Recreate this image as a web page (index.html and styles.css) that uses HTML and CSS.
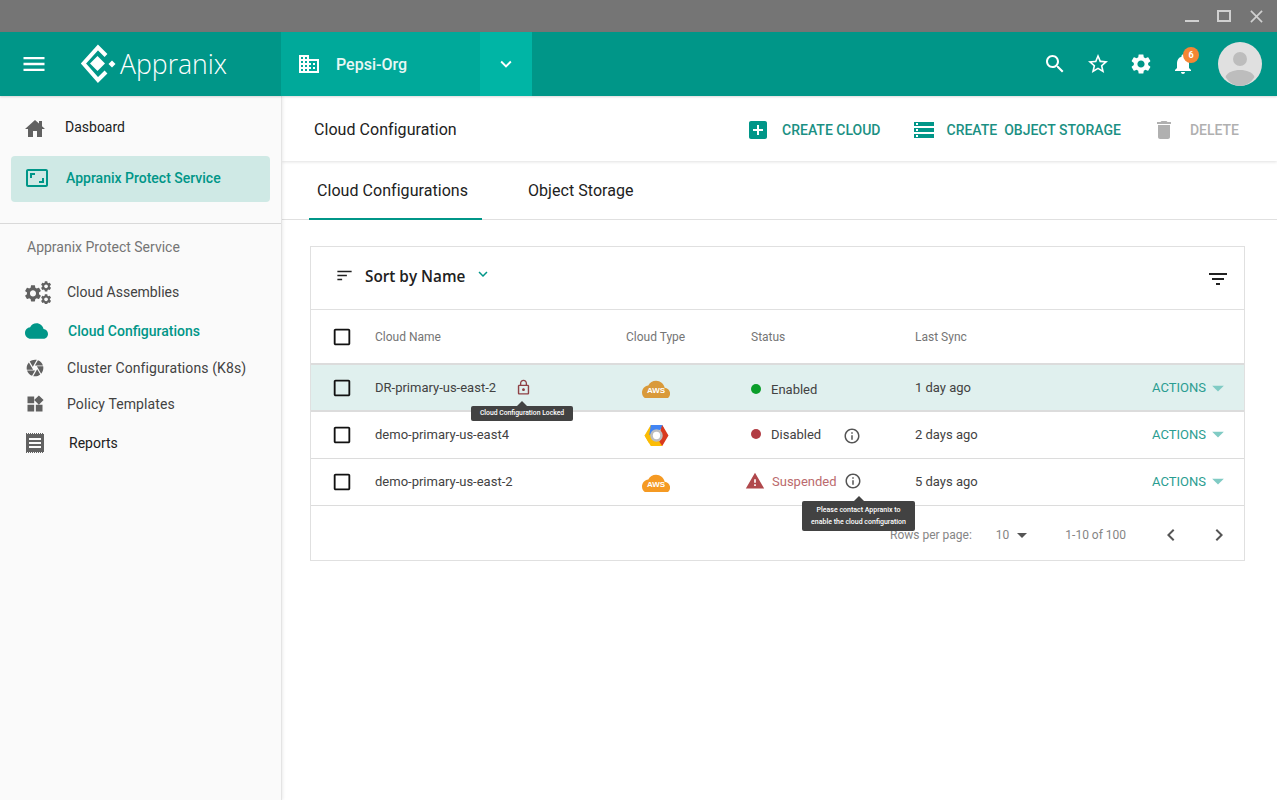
FILE: index.html
```html
<!DOCTYPE html>
<html lang="en">
<head>
    <meta charset="UTF-8">
    <title>Appranix</title>
    <link rel="stylesheet" href="styles.css">
</head>
<body>
    <svg class="defs" width="0" height="0">
        <defs>
            <path id="gear" d="M19.14 12.94c.04-.3.06-.61.06-.94 0-.32-.02-.64-.07-.94l2.03-1.58c.18-.14.23-.41.12-.61l-1.92-3.32c-.12-.22-.37-.29-.59-.22l-2.39.96c-.5-.38-1.03-.7-1.62-.94l-.36-2.54c-.04-.24-.24-.41-.48-.41h-3.84c-.24 0-.43.17-.47.41l-.36 2.54c-.59.24-1.13.57-1.62.94l-2.39-.96c-.22-.08-.47 0-.59.22L2.74 8.87c-.12.21-.08.47.12.61l2.03 1.58c-.05.3-.09.63-.09.94s.02.64.07.94l-2.03 1.58c-.18.14-.23.41-.12.61l1.92 3.32c.12.22.37.29.59.22l2.39-.96c.5.38 1.03.7 1.62.94l.36 2.54c.05.24.24.41.48.41h3.84c.24 0 .44-.17.47-.41l.36-2.54c.59-.24 1.13-.56 1.62-.94l2.39.96c.22.08.47 0 .59-.22l1.92-3.32c.12-.22.07-.47-.12-.61l-2.01-1.58zM12 15.6c-1.98 0-3.6-1.62-3.6-3.6s1.62-3.6 3.6-3.6 3.6 1.62 3.6 3.6-1.62 3.6-3.6 3.6z"/>
            <path id="box" d="M19 5v14H5V5h14m0-2H5c-1.1 0-2 .9-2 2v14c0 1.1.9 2 2 2h14c1.1 0 2-.9 2-2V5c0-1.1-.9-2-2-2z"/>
            <path id="drop" d="M7 10l5 5 5-5z"/>
            <path id="info" d="M11 7h2v2h-2zm0 4h2v6h-2zm1-9C6.48 2 2 6.48 2 12s4.48 10 10 10 10-4.48 10-10S17.52 2 12 2zm0 18c-4.41 0-8-3.59-8-8s3.59-8 8-8 8 3.59 8 8-3.59 8-8 8z"/>
            <path id="cloudshape" d="M19.35 10.04C18.67 6.59 15.64 4 12 4 9.11 4 6.6 5.64 5.35 8.04 2.34 8.36 0 10.91 0 14c0 3.31 2.69 6 6 6h13c2.76 0 5-2.24 5-5 0-2.64-2.05-4.78-4.65-4.96z"/>
        </defs>
    </svg>

    <!-- window title bar -->
    <div class="titlebar">
        <span class="win-min"></span>
        <span class="win-max"></span>
        <svg class="win-close" viewBox="0 0 14 14"><path d="M1 1l12 12M13 1L1 13"/></svg>
    </div>

    <!-- top header -->
    <header class="header">
        <div class="brand">
            <svg class="menu-icon" viewBox="0 0 24 24"><path d="M3 18h18v-2H3v2zm0-5h18v-2H3v2zm0-7v2h18V6H3z"/></svg>
            <svg class="logo" viewBox="0 0 36 40">
                <path class="logo-line" d="M26 11.500L18 3.500 3.500 19.500 18 36 26 28"/>
                <path d="M17.500 12L25 19.500 17.500 27 10 19.500z"/>
                <path d="M32 16.500L35.500 20 32 23.500 28.500 20z"/>
            </svg>
            <span class="logo-text">Appranix</span>
        </div>
        <div class="org">
            <svg class="org-icon" viewBox="0 0 24 24"><path d="M12 7V3H2v18h20V7H12zM6 19H4v-2h2v2zm0-4H4v-2h2v2zm0-4H4V9h2v2zm0-4H4V5h2v2zm4 12H8v-2h2v2zm0-4H8v-2h2v2zm0-4H8V9h2v2zm0-4H8V5h2v2zm10 12h-8v-2h2v-2h-2v-2h2v-2h-2V9h8v10zm-2-8h-2v2h2v-2zm0 4h-2v2h2v-2z"/></svg>
            <span class="org-name">Pepsi-Org</span>
        </div>
        <div class="org-toggle">
            <svg viewBox="0 0 24 24"><path d="M16.59 8.59L12 13.17 7.41 8.59 6 10l6 6 6-6z"/></svg>
        </div>
        <div class="header-actions">
            <svg class="head-icon" viewBox="0 0 24 24"><path d="M15.500 14h-.79l-.28-.27C15.410 12.590 16 11.110 16 9.500 16 5.910 13.090 3 9.500 3S3 5.910 3 9.500 5.910 16 9.500 16c1.610 0 3.090-.59 4.230-1.570l.27.28v.79l5 4.990L20.490 19l-4.990-5zm-6 0C7.010 14 5 11.990 5 9.500S7.010 5 9.500 5 14 7.010 14 9.500 11.990 14 9.500 14z"/></svg>
            <svg class="head-icon" viewBox="0 0 24 24"><path d="M22 9.240l-7.190-.62L12 2 9.190 8.630 2 9.240l5.460 4.730L5.820 21 12 17.270 18.180 21l-1.630-7.030L22 9.240zM12 15.400l-3.760 2.270 1-4.280-3.320-2.880 4.380-.38L12 6.100l1.710 4.040 4.380.38-3.320 2.880 1 4.280L12 15.400z"/></svg>
            <svg class="head-icon head-gear" viewBox="0 0 24 24"><use href="#gear"/></svg>
            <div class="bell">
                <svg class="head-icon" viewBox="0 0 24 24"><path d="M12 22c1.100 0 2-.9 2-2h-4c0 1.100.89 2 2 2zm6-6v-5c0-3.070-1.640-5.640-4.500-6.320V4c0-.83-.67-1.500-1.500-1.500s-1.500.67-1.500 1.500v.68C7.630 5.360 6 7.920 6 11v5l-2 2v1h16v-1l-2-2z"/></svg>
                <span class="badge">6</span>
            </div>
            <svg class="avatar" viewBox="0 0 44 44">
                <circle cx="22" cy="22" r="22" fill="#e0e0e0"/>
                <circle cx="22" cy="17" r="7" fill="#bdbdbd"/>
                <path d="M7.500 35c2-5 8-7 14.500-7s12.500 2 14.500 7C33 41 27 44 22 44S11 41 7.500 35z" fill="#bdbdbd"/>
            </svg>
        </div>
    </header>

    <div class="layout">
        <!-- left side navigation -->
        <aside class="sidebar">
            <div class="nav-top">
                <a class="nav-home">
                    <svg viewBox="0 0 24 24"><path d="M19 9.300V4h-3v2.600L12 3 2 12h3v8h5v-6h4v6h5v-8h3l-3-2.700z"/></svg>
                    <span>Dasboard</span>
                </a>
                <a class="nav-service">
                    <svg viewBox="0 0 24 24"><path d="M19 12h-2v3h-3v2h5v-5zM7 9h3V7H5v5h2V9zm14-6H3c-1.100 0-2 .9-2 2v14c0 1.100.9 2 2 2h18c1.100 0 2-.9 2-2V5c0-1.100-.9-2-2-2zm0 16.010H3V4.990h18v14.020z"/></svg>
                    <span>Appranix Protect Service</span>
                </a>
            </div>
            <div class="nav-section">
                <div class="nav-title">Appranix Protect Service</div>
                <a class="nav-item nav-assemblies">
                    <svg class="ic-gears" viewBox="0 0 26 23">
                        <use href="#gear" transform="translate(-2.100 2.300) scale(.84)"/>
                        <use href="#gear" transform="translate(14.700 -1) scale(.53)"/>
                        <use href="#gear" transform="translate(14.700 12) scale(.53)"/>
                    </svg>
                    <span>Cloud Assemblies</span>
                </a>
                <a class="nav-item nav-active">
                    <svg class="ic-cloud" viewBox="0 0 24 16"><use href="#cloudshape" transform="translate(0 -4)"/></svg>
                    <span>Cloud Configurations</span>
                </a>
                <a class="nav-item nav-cluster">
                    <svg viewBox="0 0 24 24"><path d="M9.400 10.500l4.770-8.260C13.470 2.090 12.750 2 12 2c-2.400 0-4.600.85-6.320 2.250l3.660 6.350.06-.1zM21.540 9c-.92-2.920-3.150-5.260-6-6.340L11.880 9h9.660zm.26 1h-7.490l.29.5 4.760 8.250C21 16.970 22 14.610 22 12c0-.69-.07-1.350-.2-2zM8.540 12l-3.900-6.750C3.010 7.030 2 9.390 2 12c0 .69.07 1.350.2 2h7.490l-1.150-2zm-6.080 3c.92 2.920 3.150 5.260 6 6.340L12.120 15H2.460zm11.270 0l-3.900 6.760c.7.15 1.420.24 2.170.24 2.400 0 4.600-.85 6.320-2.250l-3.660-6.350-.93 1.600z"/></svg>
                    <span>Cluster Configurations (K8s)</span>
                </a>
                <a class="nav-item nav-policy">
                    <svg viewBox="0 0 24 24"><path d="M13 13v8h8v-8h-8zM3 21h8v-8H3v8zM3 3v8h8V3H3zm13.660-1.310L11 7.340 16.660 13l5.660-5.660-5.660-5.650z"/></svg>
                    <span>Policy Templates</span>
                </a>
                <a class="nav-item nav-reports">
                    <svg viewBox="0 0 18 20">
                        <path fill-rule="evenodd" d="M0 1h18v18H0zM3 5v2h12V5zm0 4v2h12V9zm0 4v2h12v-2z"/>
                        <path class="serrated" d="M0 .5h18M0 19.500h18"/>
                    </svg>
                    <span>Reports</span>
                </a>
            </div>
        </aside>

        <main class="content">
            <div class="toolbar">
                <div class="page-title">Cloud Configuration</div>
                <a class="tool-btn btn-cloud">
                    <svg viewBox="0 0 24 24"><path d="M19 3H5c-1.110 0-2 .9-2 2v14c0 1.100.89 2 2 2h14c1.100 0 2-.9 2-2V5c0-1.100-.9-2-2-2zm-2 10h-4v4h-2v-4H7v-2h4V7h2v4h4v2z"/></svg>
                    <span>CREATE CLOUD</span>
                </a>
                <a class="tool-btn btn-storage">
                    <svg viewBox="0 0 24 24"><path d="M2 20h20v-4H2v4zm2-3h2v2H4v-2zM2 4v4h20V4H2zm4 3H4V5h2v2zm-4 7h20v-4H2v4zm2-3h2v2H4v-2z"/></svg>
                    <span>CREATE&nbsp; OBJECT STORAGE</span>
                </a>
                <a class="tool-btn btn-delete">
                    <svg viewBox="0 0 24 24"><path d="M6 19c0 1.100.9 2 2 2h8c1.100 0 2-.9 2-2V7H6v12zM19 4h-3.500l-1-1h-5l-1 1H5v2h14V4z"/></svg>
                    <span>DELETE</span>
                </a>
            </div>

            <div class="tabs">
                <div class="tab tab-active">Cloud Configurations</div>
                <div class="tab">Object Storage</div>
            </div>

            <section class="card">
                <div class="card-head">
                    <svg class="sort-icon" viewBox="0 0 24 24"><path d="M3 18h6v-2H3v2zM3 6v2h18V6H3zm0 7h12v-2H3v2z"/></svg>
                    <span class="sort-label">Sort by Name</span>
                    <svg class="sort-caret" viewBox="0 0 24 24"><path d="M16.590 8.590L12 13.170 7.410 8.590 6 10l6 6 6-6z"/></svg>
                    <svg class="filter-icon" viewBox="0 0 24 24"><path d="M10 18h4v-2h-4v2zM3 6v2h18V6H3zm3 7h12v-2H6v2z"/></svg>
                </div>

                <div class="row row-head">
                    <svg class="check" viewBox="0 0 24 24"><use href="#box"/></svg>
                    <div>Cloud Name</div>
                    <div>Cloud Type</div>
                    <div>Status</div>
                    <div>Last Sync</div>
                </div>

                <div class="row row-selected">
                    <svg class="check" viewBox="0 0 24 24"><use href="#box"/></svg>
                    <div class="name-cell">
                        <span>DR-primary-us-east-2</span>
                        <span class="lock-wrap">
                            <svg class="lock" viewBox="0 0 24 24"><path d="M12 17c1.100 0 2-.9 2-2s-.9-2-2-2-2 .9-2 2 .9 2 2 2zm6-9h-1V6c0-2.760-2.240-5-5-5S7 3.240 7 6v2H6c-1.100 0-2 .9-2 2v10c0 1.100.9 2 2 2h12c1.100 0 2-.9 2-2V10c0-1.100-.9-2-2-2zM8.900 6c0-1.710 1.390-3.100 3.100-3.100s3.100 1.390 3.100 3.100v2H8.900V6zM18 20H6V10h12v10z"/></svg>
                            <span class="tooltip tip-lock">Cloud Configuration Locked</span>
                        </span>
                    </div>
                    <div class="type-cell">
                        <svg class="aws aws-dim" viewBox="0 0 28 20"><use href="#cloudshape" transform="translate(0 -2) scale(1.170)"/><text x="14" y="15" text-anchor="middle">AWS</text></svg>
                    </div>
                    <div class="status-cell status-low">
                        <span class="dot dot-green"></span>
                        <span>Enabled</span>
                    </div>
                    <div class="sync-cell">1 day ago</div>
                    <a class="actions">ACTIONS <svg viewBox="0 0 24 24"><use href="#drop"/></svg></a>
                </div>

                <div class="row">
                    <svg class="check" viewBox="0 0 24 24"><use href="#box"/></svg>
                    <div class="name-cell"><span>demo-primary-us-east4</span></div>
                    <div class="type-cell">
                        <svg class="gcp" viewBox="0 0 24 22">
                            <path d="M6.500 1L.5 11l4 7 5-7 3-5 5-5z" fill="#fbbc05"/>
                            <path d="M6.500 1h11l1.500 3-7 3-5 2-2 2z" fill="#4285f4"/>
                            <path d="M17.500 1l6 10-6 10-5-1 5-8-2-5z" fill="#d93a1e"/>
                            <path d="M.5 11l6 10h11l-4-6-5-2-4-3z" fill="#fbbc05"/>
                            <circle cx="12" cy="11" r="6" fill="#bdbdbd"/>
                            <circle cx="12" cy="11" r="3.500" fill="#fff"/>
                        </svg>
                    </div>
                    <div class="status-cell">
                        <span class="dot dot-red"></span>
                        <span class="status-text">Disabled</span>
                        <svg class="info info-low" viewBox="0 0 24 24"><use href="#info"/></svg>
                    </div>
                    <div class="sync-cell">2 days ago</div>
                    <a class="actions">ACTIONS <svg viewBox="0 0 24 24"><use href="#drop"/></svg></a>
                </div>

                <div class="row">
                    <svg class="check" viewBox="0 0 24 24"><use href="#box"/></svg>
                    <div class="name-cell"><span>demo-primary-us-east-2</span></div>
                    <div class="type-cell">
                        <svg class="aws" viewBox="0 0 28 20"><use href="#cloudshape" transform="translate(0 -2) scale(1.170)"/><text x="14" y="15" text-anchor="middle">AWS</text></svg>
                    </div>
                    <div class="status-cell suspended">
                        <svg class="warn" viewBox="0 0 24 24"><path d="M1 21h22L12 2 1 21zm12-3h-2v-2h2v2zm0-4h-2v-4h2v4z"/></svg>
                        <span class="status-text">Suspended</span>
                        <span class="info-wrap">
                            <svg class="info" viewBox="0 0 24 24"><use href="#info"/></svg>
                            <span class="tooltip tip-contact">Please contact Appranix to<br>enable the cloud configuration</span>
                        </span>
                    </div>
                    <div class="sync-cell">5 days ago</div>
                    <a class="actions">ACTIONS <svg viewBox="0 0 24 24"><use href="#drop"/></svg></a>
                </div>

                <div class="pager">
                    <span class="pager-label">Rows per page:</span>
                    <span class="pager-size">10</span>
                    <svg class="pager-drop" viewBox="0 0 24 24"><use href="#drop"/></svg>
                    <span class="pager-range">1-10 of 100</span>
                    <svg class="pager-arrow" viewBox="0 0 24 24"><path d="M15.410 7.410L14 6l-6 6 6 6 1.410-1.410L10.830 12z"/></svg>
                    <svg class="pager-arrow" viewBox="0 0 24 24"><path d="M10 6L8.590 7.410 13.170 12l-4.580 4.590L10 18l6-6z"/></svg>
                </div>
            </section>
        </main>
    </div>
</body>
</html>
```

FILE: styles.css
```css
* {
    box-sizing: border-box;
}
html, body {
    margin: 0;
    padding: 0;
    height: 800px;
    overflow: hidden;
}
body {
    font-family: Roboto, "Liberation Sans", sans-serif;
    background-color: #fff;
    color: #212121;
}
svg {
    display: block;
    flex: none;
    fill: currentColor;
}
.defs {
    position: absolute;
}

/* title bar */
.titlebar {
    height: 32px;
    background-color: #757575;
    display: flex;
    align-items: center;
    justify-content: flex-end;
    color: #d0d0d0;
    padding-right: 14px;
}
.win-min {
    width: 14px;
    height: 2px;
    background-color: #d0d0d0;
    margin-top: 10px;
    margin-right: 18px;
}
.win-max {
    width: 14px;
    height: 12px;
    border: 2px solid #d0d0d0;
    margin-right: 19px;
}
.win-close {
    width: 13px;
    height: 13px;
    fill: none;
    stroke: #d0d0d0;
    stroke-width: 1.8;
}

/* header */
.header {
    height: 64px;
    background-color: #009688;
    display: flex;
    color: #fff;
    position: relative;
    z-index: 3;
    box-shadow: 0 1px 2px rgba(0, 0, 0, 0.15);
}
.brand {
    width: 281px;
    display: flex;
    align-items: center;
    padding-left: 20px;
}
.menu-icon {
    width: 28px;
    height: 28px;
}
.logo {
    width: 36px;
    height: 40px;
    margin-left: 32px;
}
.logo-line {
    fill: none;
    stroke: #fff;
    stroke-width: 4;
}
.logo-text {
    font-family: "Open Sans", sans-serif;
    font-weight: 300;
    font-size: 26.6px;
    margin-left: 4px;
}
.org {
    width: 199px;
    background-color: #00a99a;
    display: flex;
    align-items: center;
    padding-left: 16px;
}
.org-icon {
    width: 24px;
    height: 24px;
}
.org-name {
    font-size: 16px;
    font-weight: 500;
    margin-left: 15px;
    color: #e8f7f5;
}
.org-toggle {
    width: 52px;
    background-color: #00b5a5;
    display: flex;
    align-items: center;
    justify-content: center;
}
.org-toggle svg {
    width: 22px;
    height: 22px;
    margin-right: 1px;
}
.header-actions {
    margin-left: auto;
    display: flex;
    align-items: center;
    padding-right: 15px;
}
.head-icon {
    width: 24px;
    height: 24px;
    margin-right: 19px;
}
.head-gear {
    margin-right: 18px;
}
.bell {
    position: relative;
}
.bell .head-icon {
    margin-right: 23px;
}
.badge {
    position: absolute;
    top: -5px;
    left: 12px;
    width: 16px;
    height: 16px;
    border-radius: 50%;
    background-color: #f58634;
    color: #fff;
    font-size: 9px;
    font-weight: 700;
    line-height: 16px;
    text-align: center;
}
.avatar {
    width: 44px;
    height: 44px;
}

/* page layout */
.layout {
    display: flex;
    height: 704px;
}
.sidebar {
    width: 282px;
    flex: none;
    background-color: #fafafa;
    border-right: 1px solid #e4e4e4;
    box-shadow: 1px 0 3px rgba(0, 0, 0, 0.08);
    position: relative;
    z-index: 2;
}
.sidebar a {
    display: flex;
    align-items: center;
}
.nav-top {
    height: 128px;
    padding: 19px 11px 0;
    border-bottom: 1px solid #d9d9d9;
}
.nav-home {
    height: 24px;
    padding-left: 12px;
    font-size: 14px;
    color: #212121;
    margin-bottom: 17px;
}
.nav-home svg {
    width: 24px;
    height: 24px;
    color: #616161;
    margin-top: 3px;
}
.nav-home span {
    margin-left: 18px;
}
.nav-service {
    height: 46px;
    background-color: #cfe9e5;
    border-radius: 4px;
    padding-left: 14px;
    padding-bottom: 2px;
    color: #009688;
    font-size: 14px;
    font-weight: 500;
}
.nav-service svg {
    width: 24px;
    height: 24px;
}
.nav-service span {
    margin-left: 17px;
}
.nav-title {
    font-size: 14px;
    color: #757575;
    padding: 15px 0 0 27px;
    height: 49px;
}
.nav-item {
    padding-left: 25px;
    font-size: 14px;
    color: #424242;
    height: 24px;
}
.nav-assemblies {
    margin-top: 7px;
}
.nav-assemblies span {
    margin-left: 16px;
}
.ic-gears {
    width: 26px;
    height: 23px;
    color: #616161;
}
.nav-active {
    margin-top: 15px;
    color: #009688;
    font-weight: 500;
}
.ic-cloud {
    width: 23px;
    height: 16px;
}
.nav-active span {
    margin-left: 20px;
}
.nav-cluster, .nav-policy {
    margin-top: 13px;
    letter-spacing: 0.1px;
}
.nav-cluster svg, .nav-policy svg {
    width: 20px;
    height: 20px;
    color: #616161;
}
.nav-cluster span, .nav-policy span {
    margin-left: 22px;
}
.nav-policy {
    margin-top: 12px;
}
.nav-reports {
    margin-top: 15px;
    padding-left: 26px;
}
.nav-reports svg {
    width: 18px;
    height: 20px;
    color: #616161;
}
.serrated {
    fill: none;
    stroke: #616161;
    stroke-dasharray: 1 1;
}
.nav-reports span {
    margin-left: 25px;
    color: #212121;
}

/* main area */
.content {
    flex: 1;
    min-width: 0;
}
.toolbar {
    height: 65px;
    display: flex;
    align-items: center;
    padding: 2px 0 0 32px;
    box-shadow: 0 1px 3px rgba(0, 0, 0, 0.12);
}
.page-title {
    font-size: 16px;
    letter-spacing: 0.05px;
    color: #212121;
    margin-right: auto;
}
.tool-btn {
    display: flex;
    align-items: center;
    font-size: 14px;
    font-weight: 500;
    color: #1b9083;
}
.tool-btn svg {
    width: 24px;
    height: 24px;
    color: #009688;
}
.btn-cloud {
    margin-right: 30px;
}
.btn-cloud span {
    margin-left: 12px;
}
.btn-storage {
    margin-right: 31px;
}
.btn-storage svg {
    margin-left: 1px;
}
.btn-storage span {
    margin-left: 11px;
}
.btn-delete {
    color: #b0b0b0;
    margin-right: 38px;
}
.btn-delete svg {
    color: #b0b0b0;
}
.btn-delete span {
    margin-left: 14px;
}
.tabs {
    height: 59px;
    padding-left: 27px;
    display: flex;
    border-bottom: 1px solid #e0e0e0;
}
.tab {
    font-size: 16px;
    letter-spacing: 0.05px;
    padding: 20px 14px 0 8px;
    margin-right: 38px;
    height: 59px;
}
.tab-active {
    border-bottom: 2px solid #009688;
}

/* card and table */
.card {
    width: 935px;
    margin: 26px 0 0 28px;
    border: 1px solid #e0e0e0;
}
.card-head {
    height: 63px;
    display: flex;
    align-items: center;
    padding: 0 14px 4px 24px;
    border-bottom: 1px solid #e0e0e0;
}
.sort-icon {
    width: 19px;
    height: 19px;
    margin-top: -2px;
}
.sort-label {
    font-family: "Open Sans", sans-serif;
    font-size: 15.3px;
    font-weight: 600;
    color: #212121;
    margin-left: 11px;
}
.sort-caret {
    width: 18px;
    height: 18px;
    color: #009688;
    margin: -4px 0 0 9px;
}
.filter-icon {
    width: 24px;
    height: 24px;
    margin-left: auto;
    margin-top: 5px;
}
.row {
    display: grid;
    grid-template-columns: 44px 251px 125px 164px 1fr auto;
    align-items: center;
    height: 47px;
    padding-left: 20px;
    border-bottom: 1px solid #dcdcdc;
    font-size: 13px;
    color: #424242;
}
.row-head {
    height: 55px;
    border-bottom-width: 2px;
    font-size: 12px;
    color: #757575;
}
.row-selected {
    background-color: #e0f0ee;
    border-bottom-width: 2px;
}
.name-cell, .sync-cell, .status-cell, .actions {
    padding-bottom: 2px;
}
.row-selected .name-cell, .row-selected .sync-cell, .row-selected .actions {
    padding-bottom: 0;
}
.check {
    width: 22px;
    height: 22px;
    color: #111;
}
.name-cell {
    display: flex;
    align-items: center;
}
.lock-wrap, .info-wrap {
    position: relative;
    display: block;
}
.lock-wrap {
    margin-left: 19px;
}
.lock {
    width: 17px;
    height: 17px;
    color: #8f4145;
}
.tooltip {
    position: absolute;
    z-index: 5;
    background-color: #424242;
    color: #fff;
    border-radius: 2px;
    font-size: 7px;
    font-weight: 500;
    text-align: center;
    white-space: nowrap;
}
.tooltip::before {
    content: "";
    position: absolute;
    top: -5px;
    left: 50%;
    margin-left: -5px;
    border-left: 5px solid transparent;
    border-right: 5px solid transparent;
    border-bottom: 5px solid #424242;
}
.tip-lock {
    top: 27px;
    left: -44px;
    width: 102px;
    height: 15px;
    line-height: 15px;
    font-size: 6.8px;
}
.tip-contact {
    top: 29px;
    left: -42px;
    width: 113px;
    height: 30px;
    line-height: 12px;
    padding-top: 3px;
}
.type-cell {
    padding-left: 16px;
}
.aws {
    width: 28px;
    height: 20px;
    color: #f59a23;
}
.aws-dim {
    color: #d99a3a;
}
.aws text {
    font-family: "Liberation Sans", sans-serif;
    font-size: 8px;
    font-weight: 700;
    fill: #fff;
}
.gcp {
    width: 25px;
    height: 23px;
    margin-left: 2px;
}
.status-cell {
    display: flex;
    align-items: center;
}
.status-low {
    padding: 3px 0 0;
}
.dot {
    width: 10px;
    height: 10px;
    border-radius: 50%;
    margin-right: 10px;
}
.dot-green {
    background-color: #0a9e2a;
}
.dot-red {
    background-color: #b23c43;
}
.status-text {
    width: 72px;
}
.info {
    width: 18px;
    height: 18px;
    color: #555;
}
.info-low {
    margin-top: 4px;
}
.suspended {
    margin-left: -6px;
    color: #bb6a6d;
}
.warn {
    width: 20px;
    height: 20px;
    color: #b0484c;
    margin-right: 7px;
}
.actions {
    display: flex;
    align-items: center;
    color: #2a9d91;
    font-size: 13px;
    padding-right: 12px;
}
.actions svg {
    width: 28px;
    height: 28px;
    margin-left: -2px;
    color: #80cbc4;
}
.pager {
    height: 54px;
    display: flex;
    align-items: center;
    font-size: 12px;
    color: #858585;
    padding: 4px 0 0 579px;
    white-space: nowrap;
}
.pager-label {
    width: 82px;
}
.pager-size {
    margin-left: 24px;
    width: 15px;
}
.pager-drop {
    width: 24px;
    height: 24px;
    color: #555;
    margin-left: 1px;
}
.pager-range {
    margin-left: 31px;
    margin-right: 33px;
}
.pager-arrow {
    width: 24px;
    height: 24px;
    color: #555;
    margin-right: 24px;
}
```
